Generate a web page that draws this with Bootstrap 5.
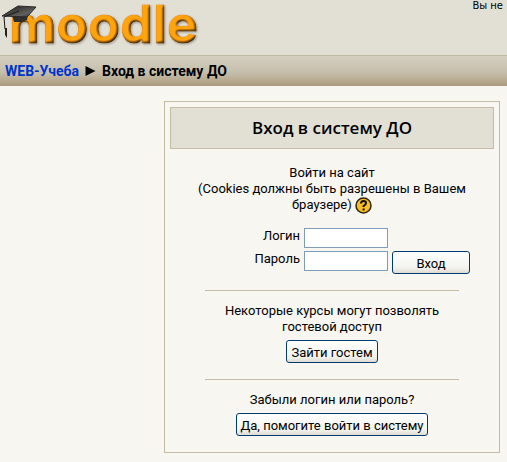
<!DOCTYPE html>
<html lang="ru">
<head>
<meta charset="utf-8">
<meta name="viewport" content="width=device-width, initial-scale=1">
<title>WEB-Учеба: Вход в систему ДО</title>
<link href="https://cdn.jsdelivr.net/npm/bootstrap@5.3.0/dist/css/bootstrap.min.css" rel="stylesheet">
<style>
body{background:#f7f6f1;color:#000;font:13px/16px Roboto,"Liberation Sans",sans-serif}
.site-head{background:#e2dfd5;height:55px}
.site-head svg{width:204px;height:55px;overflow:visible}
.login-state{font:10px/12px "DejaVu Sans",sans-serif}
.crumbs{background:linear-gradient(#d4d0bf,#c5bead 55%,#b8ac91 80%,#aa9a7e);border-top:1px solid #bdb89f;height:31px;font-size:14px;font-weight:700;padding:0 5px;gap:6px}
.crumbs a{color:#0033cc}
.arrow{width:11px;height:10px}
.login-box{width:336px;border:1px solid #c3bba3;padding:5px;margin:15px 7px 9px}
.login-title{background:#e2dfd5;border:1px solid #c3bba3;font:600 17px/20px "Open Sans",sans-serif;padding:10px 0}
.inner{margin:0 35px;padding-bottom:11px}
.intro{padding:16px 20px 14px;margin:0 -35px}
.login-form{display:grid;grid-template-columns:95px 84px 78px;column-gap:4px;row-gap:3px}
.login-form input{border:1px solid #7f9db9;background:#fff;height:20px;padding:1px 3px;border-radius:0;width:100%}
.xp{border:1px solid #003c74;border-radius:3px;background:linear-gradient(#fff,#f3f3ee 75%,#dedbd2);height:23px;padding:2px 4px 0;line-height:18px;color:#000}
.part{border-top:1px solid #c3bba3;padding-top:12px}
.part-action{margin-top:5px}
.help svg{width:17px;height:17px}
</style>
</head>
<body>
<header class="site-head d-flex justify-content-between">
<svg viewBox="0 0 204 55" role="img" aria-label="moodle">
<defs>
<linearGradient id="cap" x1="0" x2="1" y2="1"><stop stop-color="#1b1b1b"/><stop offset=".7" stop-color="#62605e"/><stop offset="1" stop-color="#222"/></linearGradient>
<filter id="bevel" x="-5%" y="-5%" width="112%" height="125%" color-interpolation-filters="sRGB">
<feGaussianBlur in="SourceAlpha" stdDeviation="1.6" result="b"/>
<feDiffuseLighting in="b" surfaceScale="3" diffuseConstant="1.25" lighting-color="#fff" result="l"><feDistantLight azimuth="230" elevation="58"/></feDiffuseLighting>
<feComposite in="SourceGraphic" in2="l" operator="arithmetic" k1=".85" k2=".2" result="c"/>
<feComposite in="c" in2="SourceAlpha" operator="in" result="d"/>
<feDropShadow in="d" dx="1" dy="1" stdDeviation="1" flood-color="#55483a" flood-opacity=".5"/>
</filter>
</defs>
<text x="9" y="43" font-family="Inter,sans-serif" font-weight="700" font-size="52" fill="#ff9c0c" stroke="#f39a18" stroke-width="1" filter="url(#bevel)">moodle</text>
<path d="M12 15l2 7 8 0 5-2 1-6z" fill="#302e2d"/>
<path d="M2 16L18 6l18 1-9 10z" fill="url(#cap)" stroke="#292827"/>
<path d="M19 11L4 17l1 12" fill="none" stroke="#161616"/>
<path d="M5 28l2 0 0 10-2-3z" fill="#222"/>
</svg>
<div class="login-state pe-1 text-nowrap">Вы не</div>
</header>
<nav class="crumbs d-flex align-items-center" aria-label="Навигация">
<a class="text-decoration-none" href="#">WEB-Учеба</a>
<svg class="arrow" viewBox="0 0 10 10" aria-hidden="true"><path d="M0 0l10 5-10 5z"/></svg>
<span>Вход в систему ДО</span>
</nav>
<main class="d-flex justify-content-end">
<section class="login-box text-center">
<h1 class="login-title mb-0">Вход в систему ДО</h1>
<div class="inner">
<div class="intro">Войти на сайт<br>(Cookies должны быть разрешены в Вашем браузере) <a class="help" href="#" aria-label="Помощь"><svg viewBox="0 0 17 17"><circle cx="8.500" cy="8.500" r="7.500" fill="#f7bd25" stroke="#30260f" stroke-width="1.500"/><path d="M6 6.500Q6 4 8.500 4T11 6.200Q11 7.500 8.600 9V10M8.600 11.500V13.500" fill="none" stroke="#111" stroke-width="2"/></svg></a></div>
<form class="login-form mb-3">
<label class="text-end" for="user">Логин</label><input id="user" type="text"><span></span>
<label class="text-end" for="pass">Пароль</label><input id="pass" type="password"><button class="xp" type="submit">Вход</button>
</form>
<div class="part mb-3">Некоторые курсы могут позволять гостевой доступ<div class="part-action"><button class="xp" type="button">Зайти гостем</button></div></div>
<div class="part">Забыли логин или пароль?<div class="part-action"><button class="xp text-nowrap" type="button">Да, помогите войти в систему</button></div></div>
</div>
</section>
</main>
<script src="https://cdn.jsdelivr.net/npm/bootstrap@5.3.0/dist/js/bootstrap.bundle.min.js"></script>
</body>
</html>
